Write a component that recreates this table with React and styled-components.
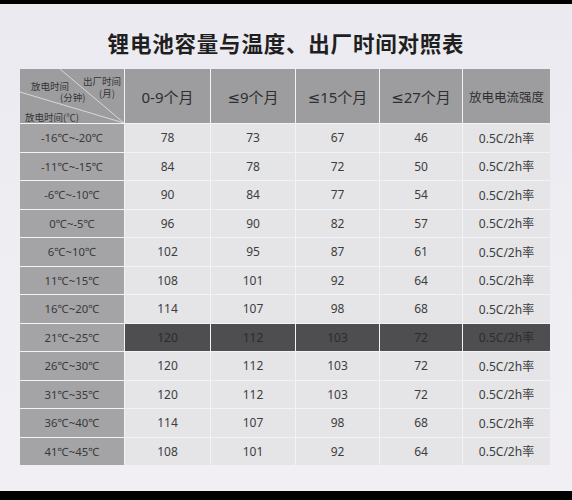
import React from "react";
import styled, { createGlobalStyle } from "styled-components";

const Global = createGlobalStyle`
  html, body { margin: 0; padding: 0; background: #000; }
  body { font-family: "Noto Sans", "Noto Sans CJK SC", sans-serif; }
`;

const Screen = styled.div`
  width: 572px;
  height: 500px;
  background: #000;
  display: flex;
  flex-direction: column;
  overflow: hidden;
`;

const Sheet = styled.div`
  margin-top: 4px;
  height: 487px;
  background: linear-gradient(180deg, #ebeaf0 0%, #efeef3 60%, #f1eff3 100%);
  display: flex;
  flex-direction: column;
  align-items: flex-start;
`;

const Title = styled.h1`
  align-self: center;
  margin: 25px 0 0 0;
  height: 28px;
  line-height: 28px;
  font-family: "Noto Sans CJK SC", sans-serif;
  font-weight: 700;
  font-size: 21.5px;
  letter-spacing: 0.8px;
  color: #1f1f21;
`;

const Table = styled.div`
  margin-top: 12px;
  margin-left: 20px;
  display: grid;
  grid-template-columns: 104px 85px 84px 83px 82px 87px;
  grid-template-rows: 54px repeat(12, 27.5px);
  gap: 1px;
  background: #f3f3f5;
`;

const Cell = styled.div`
  display: flex;
  align-items: center;
  justify-content: center;
  font-family: "Noto Sans", "DejaVu Sans", "Noto Sans CJK SC", sans-serif;
  font-size: 12px;
  color: ${(p) => (p.$dark ? "#2c2c2e" : "#3d3d40")};
  background: ${(p) => (p.$dark ? "#4e4e50" : "#e5e5e7")};
`;

const Side = styled(Cell)`
  background: #a4a4a6;
  color: #38383a;
  font-size: 11.3px;
`;

const Head = styled(Cell)`
  background: #9d9d9f;
  color: #2f2f31;
  font-size: ${(p) => (p.$small ? "12.5px" : "15px")};
`;

const Corner = styled.div`
  position: relative;
  background: #9d9d9f;
  overflow: hidden;
`;

const Lines = styled.svg`
  position: absolute;
  inset: 0;
`;

const Tag = styled.span`
  position: absolute;
  font-family: "Noto Sans CJK SC", sans-serif;
  font-size: 9.5px;
  line-height: 10px;
  color: #333336;
  white-space: nowrap;
  left: ${(p) => p.$x}px;
  top: ${(p) => p.$y}px;
`;

const rows = [
  ["-16℃~-20℃", 78, 73, 67, 46],
  ["-11℃~-15℃", 84, 78, 72, 50],
  ["-6℃~-10℃", 90, 84, 77, 54],
  ["0℃~-5℃", 96, 90, 82, 57],
  ["6℃~10℃", 102, 95, 87, 61],
  ["11℃~15℃", 108, 101, 92, 64],
  ["16℃~20℃", 114, 107, 98, 68],
  ["21℃~25℃", 120, 112, 103, 72],
  ["26℃~30℃", 120, 112, 103, 72],
  ["31℃~35℃", 120, 112, 103, 72],
  ["36℃~40℃", 114, 107, 98, 68],
  ["41℃~45℃", 108, 101, 92, 64],
];

export default function App() {
  return (
    <>
      <Global />
      <Screen>
        <Sheet>
          <Title>锂电池容量与温度、出厂时间对照表</Title>
          <Table>
            <Corner>
              <Lines width="104" height="54" viewBox="0 0 104 54">
                <line x1="40" y1="0" x2="104" y2="54" stroke="#d8d8da" strokeWidth="1" />
                <line x1="0" y1="23" x2="104" y2="54" stroke="#d8d8da" strokeWidth="1" />
              </Lines>
              <Tag $x={63} $y={7}>出厂时间</Tag>
              <Tag $x={79} $y={19}>(月)</Tag>
              <Tag $x={11} $y={12}>放电时间</Tag>
              <Tag $x={40} $y={23}>(分钟)</Tag>
              <Tag $x={5} $y={43}>放电时间(℃)</Tag>
            </Corner>
            <Head>0-9个月</Head>
            <Head>≤9个月</Head>
            <Head>≤15个月</Head>
            <Head>≤27个月</Head>
            <Head $small>放电电流强度</Head>
            {rows.map((r, i) => {
              const dark = i === 7;
              return (
                <React.Fragment key={r[0]}>
                  <Side>{r[0]}</Side>
                  <Cell $dark={dark}>{r[1]}</Cell>
                  <Cell $dark={dark}>{r[2]}</Cell>
                  <Cell $dark={dark}>{r[3]}</Cell>
                  <Cell $dark={dark}>{r[4]}</Cell>
                  <Cell $dark={dark}>0.5C/2h率</Cell>
                </React.Fragment>
              );
            })}
          </Table>
        </Sheet>
      </Screen>
    </>
  );
}
